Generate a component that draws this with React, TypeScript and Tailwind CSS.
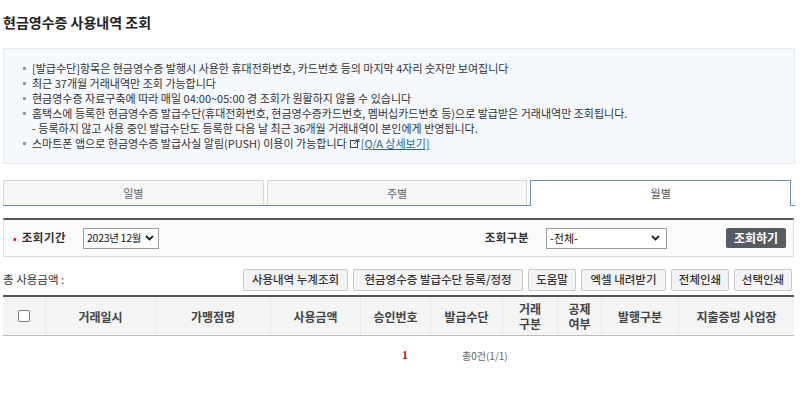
import React from 'react';

const font = { fontFamily: '"Noto Sans CJK KR", "Noto Sans", sans-serif' };

const notices = [
  '[발급수단]항목은 현금영수증 발행시 사용한 휴대전화번호, 카드번호 등의 마지막 4자리 숫자만 보여집니다',
  '최근 37개월 거래내역만 조회 가능합니다',
  '현금영수증 자료구축에 따라 매일 04:00~05:00 경 조회가 원활하지 않을 수 있습니다',
  '홈택스에 등록한 현금영수증 발급수단(휴대전화번호, 현금영수증카드번호, 멤버십카드번호 등)으로 발급받은 거래내역만 조회됩니다.',
];

const columns = [
  { label: '거래일시', w: 'w-[110px]' },
  { label: '가맹점명', w: 'w-[115px]' },
  { label: '사용금액', w: 'w-[90px]' },
  { label: '승인번호', w: 'w-[70px]' },
  { label: '발급수단', w: 'w-[72px]' },
  { label: '거래\n구분', w: 'w-[55px]' },
  { label: '공제\n여부', w: 'w-[44px]' },
  { label: '발행구분', w: 'w-[77px]' },
  { label: '지출증빙 사업장', w: 'flex-1' },
];

const actions = [
  { label: '사용내역 누계조회', w: 'w-[105px]' },
  { label: '현금영수증 발급수단 등록/정정', w: 'w-[170px]' },
  { label: '도움말', w: 'w-[48px]' },
  { label: '엑셀 내려받기', w: 'w-[85px]' },
  { label: '전체인쇄', w: 'w-[58px]' },
  { label: '선택인쇄', w: 'w-[58px]' },
];

function Bullet() {
  return <span className="mr-[6px] inline-block h-[3px] w-[3px] shrink-0 bg-[#9a9a9a]" />;
}

function Chevron() {
  return (
    <svg width="9" height="6" viewBox="0 0 9 6" className="shrink-0">
      <path d="M1 1l3.5 3.5L8 1" fill="none" stroke="#222" strokeWidth="1.8" />
    </svg>
  );
}

export default function App() {
  return (
    <div className="w-[802px] bg-white px-[3px] text-[#333]" style={font}>
      <h1 className="pt-[13px] text-[14px] font-bold leading-[18px] text-[#222]">현금영수증 사용내역 조회</h1>

      <div className="mt-[17px] mr-[4px] border border-[#e6eaf0] bg-[#f5f8fc] py-[12px] pl-[19px] text-[11px] leading-[15px]">
        {notices.map((t) => (
          <div key={t} className="flex items-center">
            <Bullet />
            <span>{t}</span>
          </div>
        ))}
        <div className="pl-[9px]">- 등록하지 않고 사용 중인 발급수단도 등록한 다음 날 최근 36개월 거래내역이 본인에게 반영됩니다.</div>
        <div className="flex items-center">
          <Bullet />
          <span>스마트폰 앱으로 현금영수증 발급사실 알림(PUSH) 이용이 가능합니다</span>
          <svg width="10" height="9" viewBox="0 0 10 9" className="ml-[3px] mr-[1px]">
            <rect x="0.5" y="1.5" width="7" height="7" fill="none" stroke="#444" />
            <path d="M4 5l5-5M6 0h3v3" fill="none" stroke="#444" />
          </svg>
          <span className="text-[#2b5fb4] underline">[Q/A 상세보기]</span>
        </div>
      </div>

      <div className="mt-[16px] mr-[4px] flex h-[26px] gap-[3px] border-b border-[#6f8db5] pr-[4px]">
        <div className="flex flex-1 items-center justify-center border border-b-0 border-[#d6d6d6] bg-[#f7f7f7] text-[11px] text-[#666]">일별</div>
        <div className="flex flex-1 items-center justify-center border border-b-0 border-[#d6d6d6] bg-[#f7f7f7] text-[11px] text-[#666]">주별</div>
        <div className="mb-[-1px] flex flex-1 items-center justify-center border border-b-0 border-[#6f8db5] bg-white text-[11px] text-[#555]">월별</div>
      </div>

      <div className="mt-[12px] mr-[5px] flex h-[39px] items-center border border-t-2 border-[#dadada] border-t-[#555] bg-[#fbfbfb] pl-[9px] pr-[7px]">
        <span className="text-[11px] text-[#d0021b]">•</span>
        <span className="ml-[5px] text-[11.5px] font-bold tracking-[0.5px]">조회기간</span>
        <div className="ml-[17px] flex h-[21px] w-[76px] items-center justify-between whitespace-nowrap border border-[#9c9c9c] bg-white pl-[3px] pr-[4px] text-[10.5px] tracking-[-0.3px] text-[#111]">
          <span>2023년 12월</span>
          <Chevron />
        </div>
        <span className="ml-auto text-[11.5px] font-bold tracking-[0.5px]">조회구분</span>
        <div className="ml-[17px] flex h-[21px] w-[121px] items-center justify-between border border-[#9c9c9c] bg-white pl-[3px] pr-[6px] text-[11px] text-[#111]">
          <span>-전체-</span>
          <Chevron />
        </div>
        <button className="ml-[59px] h-[20px] w-[60px] rounded-[2px] bg-[#565c64] text-[12px] font-bold text-white">조회하기</button>
      </div>

      <div className="mt-[12px] mr-[7px] flex items-center">
        <span className="text-[11.5px]">총 사용금액 :</span>
        <div className="ml-auto flex gap-[5px]">
          {actions.map((a) => (
            <button
              key={a.label}
              className={`${a.w} h-[22px] whitespace-nowrap rounded-[2px] border border-[#c9c9c9] bg-[#f3f3f3] text-[11.5px] font-medium text-[#333]`}
            >
              {a.label}
            </button>
          ))}
        </div>
      </div>

      <div className="mt-[4px] mr-[5px] flex h-[41px] border-t-2 border-b border-t-[#555] border-b-[#bdbdbd] bg-[#f4f4f4]">
        <div className="flex w-[42px] items-center justify-center">
          <span className="h-[12px] w-[12px] rounded-[2px] border border-[#777] bg-white" />
        </div>
        {columns.map((c) => (
          <div
            key={c.label}
            className={`${c.w} flex items-center justify-center whitespace-pre-line border-l border-[#eaeaea] text-center text-[12px] font-bold leading-[15px] text-[#444]`}
          >
            {c.label}
          </div>
        ))}
      </div>

      <div className="mt-[10px] flex items-center pl-[399px]">
        <span className="text-[12px] font-bold text-[#b8142c]" style={{ fontFamily: '"Liberation Serif", serif' }}>1</span>
        <span className="ml-[54px] text-[10px] text-[#666]">총0건(1/1)</span>
      </div>
      <div className="h-[30px]" />
    </div>
  );
}
